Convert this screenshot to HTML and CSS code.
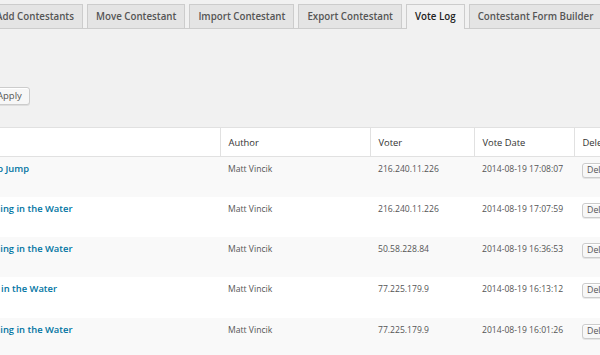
FILE: index.html
```html
<!DOCTYPE html>
<html lang="en">
<head>
    <meta charset="UTF-8">
    <meta name="viewport" content="width=device-width, initial-scale=1.0">
    <title>Vote Log</title>
    <link rel="stylesheet" href="styles.css">
</head>
<body>
    <div class="wrap">
        <h2 class="nav-tab-wrapper">
            <a href="#" class="nav-tab">Add Contestants</a>
            <a href="#" class="nav-tab">Move Contestant</a>
            <a href="#" class="nav-tab">Import Contestant</a>
            <a href="#" class="nav-tab">Export Contestant</a>
            <a href="#" class="nav-tab nav-tab-active">Vote Log</a>
            <a href="#" class="nav-tab">Contestant Form Builder</a>
        </h2>

        <div class="tablenav">
            <button class="button">Apply</button>
        </div>

        <table class="vote-log">
            <colgroup>
                <col class="col-title">
                <col class="col-author">
                <col class="col-voter">
                <col class="col-date">
                <col class="col-delete">
            </colgroup>
            <thead>
                <tr>
                    <th></th>
                    <th>Author</th>
                    <th>Voter</th>
                    <th>Vote Date</th>
                    <th>Delete</th>
                </tr>
            </thead>
            <tbody>
                <tr class="alternate">
                    <td><a href="#" class="row-title">Rooftop Jump</a></td>
                    <td>Matt Vincik</td>
                    <td>216.240.11.226</td>
                    <td>2014-08-19 17:08:07</td>
                    <td><button class="button button-small">Delete</button></td>
                </tr>
                <tr>
                    <td><a href="#" class="row-title">Swimming in the Water</a></td>
                    <td>Matt Vincik</td>
                    <td>216.240.11.226</td>
                    <td>2014-08-19 17:07:59</td>
                    <td><button class="button button-small">Delete</button></td>
                </tr>
                <tr class="alternate">
                    <td><a href="#" class="row-title">Swimming in the Water</a></td>
                    <td>Matt Vincik</td>
                    <td>50.58.228.84</td>
                    <td>2014-08-19 16:36:53</td>
                    <td><button class="button button-small">Delete</button></td>
                </tr>
                <tr>
                    <td><a href="#" class="row-title">Turtles in the Water</a></td>
                    <td>Matt Vincik</td>
                    <td>77.225.179.9</td>
                    <td>2014-08-19 16:13:12</td>
                    <td><button class="button button-small">Delete</button></td>
                </tr>
                <tr class="alternate">
                    <td><a href="#" class="row-title">Swimming in the Water</a></td>
                    <td>Matt Vincik</td>
                    <td>77.225.179.9</td>
                    <td>2014-08-19 16:01:26</td>
                    <td><button class="button button-small">Delete</button></td>
                </tr>
            </tbody>
        </table>
    </div>
</body>
</html>
```

FILE: styles.css
```css
* {
    margin: 0;
    padding: 0;
    box-sizing: border-box;
}
body {
    background: #f1f1f1;
    font-family: "Open Sans", "Liberation Sans", sans-serif;
    color: #555;
    overflow: hidden;
}
.wrap {
    margin-left: -41px;
    width: 720px;
}
.nav-tab-wrapper {
    display: flex;
    align-items: flex-end;
    padding: 4px 0 0 28px;
    border-bottom: 1px solid #ccc;
    font-weight: 600;
}
.nav-tab {
    display: block;
    height: 24px;
    line-height: 23px;
    padding: 0 8px;
    margin-right: 4px;
    border: 1px solid #ccc;
    border-bottom: 0;
    background: #e4e4e4;
    color: #555;
    font-size: 9.75px;
    text-decoration: none;
    white-space: nowrap;
}
.nav-tab-active {
    height: 25px;
    margin-bottom: -1px;
    background: #f1f1f1;
    color: #222;
}
.tablenav {
    display: flex;
    align-items: flex-start;
    padding-left: 30px;
    margin-top: 58px;
    height: 18px;
}
.button {
    display: inline-block;
    height: 18px;
    line-height: 16px;
    padding: 0 7px;
    border: 1px solid #ccc;
    border-radius: 3px;
    background: #f7f7f7;
    box-shadow: inset 0 1px 0 #fff, 0 1px 0 rgba(0, 0, 0, 0.08);
    color: #555;
    font-family: inherit;
    font-size: 9.5px;
}
.button-small {
    display: block;
    height: 15px;
    line-height: 13px;
    padding: 0 4px;
    font-size: 8.8px;
}
.vote-log {
    margin-top: 22px;
    width: 694px;
    table-layout: fixed;
    border-collapse: collapse;
    background: #fff;
    border-top: 1px solid #e1e1e1;
}
.col-title { width: 261px; }
.col-author { width: 150px; }
.col-voter { width: 104px; }
.col-date { width: 100px; }
.col-delete { width: 79px; }
.vote-log th {
    height: 29px;
    padding: 0 8px;
    text-align: left;
    font-weight: 400;
    font-size: 9.4px;
    color: #333;
    border-bottom: 1px solid #e1e1e1;
    border-left: 1px solid #e1e1e1;
    white-space: nowrap;
    overflow: hidden;
}
.vote-log th:first-child {
    border-left: 0;
}
.vote-log td {
    height: 40.3px;
    padding: 5px 8px 0;
    vertical-align: top;
    font-size: 8.6px;
    line-height: 14px;
    white-space: nowrap;
    overflow: hidden;
}
.vote-log tr.alternate td {
    background: #f9f9f9;
}
.vote-log td:last-child {
    padding-top: 6px;
}
.row-title {
    color: #0074a2;
    font-weight: 600;
    font-size: 9.4px;
    text-decoration: none;
}
```
